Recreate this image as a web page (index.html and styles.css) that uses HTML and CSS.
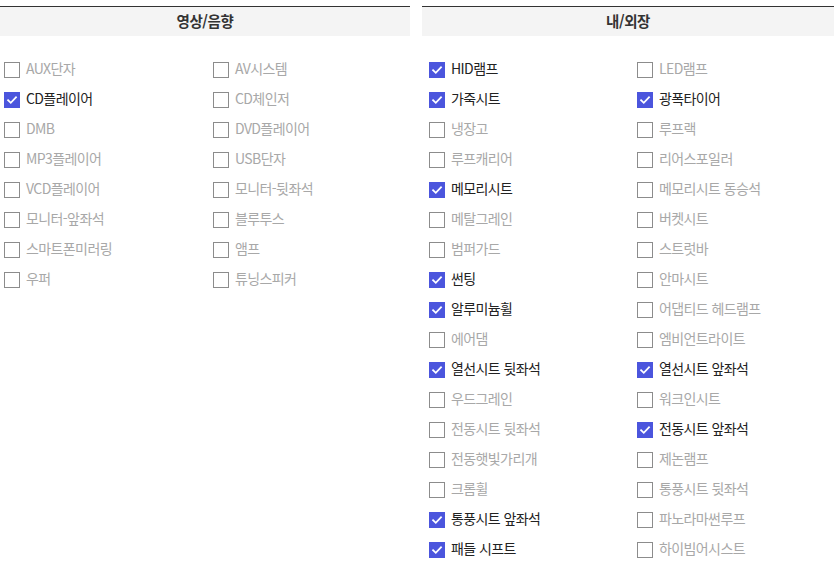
FILE: index.html
```html
<!DOCTYPE html>
<html lang="ko">
<head>
<meta charset="utf-8">
<link rel="stylesheet" href="styles.css">
</head>
<body>
<div class="wrap">
  <section class="panel panel-left">
    <h2 class="head">영상/음향</h2>
    <ul class="list">
      <li class="item"><span class="box"></span>AUX단자</li>
      <li class="item"><span class="box"></span>AV시스템</li>
      <li class="item on"><span class="box"><svg viewBox="0 0 16 16"><polyline points="3.5,8.2 6.6,11.2 12.6,4.8"/></svg></span>CD플레이어</li>
      <li class="item"><span class="box"></span>CD체인저</li>
      <li class="item"><span class="box"></span>DMB</li>
      <li class="item"><span class="box"></span>DVD플레이어</li>
      <li class="item"><span class="box"></span>MP3플레이어</li>
      <li class="item"><span class="box"></span>USB단자</li>
      <li class="item"><span class="box"></span>VCD플레이어</li>
      <li class="item"><span class="box"></span>모니터-뒷좌석</li>
      <li class="item"><span class="box"></span>모니터-앞좌석</li>
      <li class="item"><span class="box"></span>블루투스</li>
      <li class="item"><span class="box"></span>스마트폰미러링</li>
      <li class="item"><span class="box"></span>앰프</li>
      <li class="item"><span class="box"></span>우퍼</li>
      <li class="item"><span class="box"></span>튜닝스피커</li>
    </ul>
  </section>
  <section class="panel panel-right">
    <h2 class="head">내/외장</h2>
    <ul class="list">
      <li class="item on"><span class="box"><svg viewBox="0 0 16 16"><polyline points="3.5,8.2 6.6,11.2 12.6,4.8"/></svg></span>HID램프</li>
      <li class="item"><span class="box"></span>LED램프</li>
      <li class="item on"><span class="box"><svg viewBox="0 0 16 16"><polyline points="3.5,8.2 6.6,11.2 12.6,4.8"/></svg></span>가죽시트</li>
      <li class="item on"><span class="box"><svg viewBox="0 0 16 16"><polyline points="3.5,8.2 6.6,11.2 12.6,4.8"/></svg></span>광폭타이어</li>
      <li class="item"><span class="box"></span>냉장고</li>
      <li class="item"><span class="box"></span>루프랙</li>
      <li class="item"><span class="box"></span>루프캐리어</li>
      <li class="item"><span class="box"></span>리어스포일러</li>
      <li class="item on"><span class="box"><svg viewBox="0 0 16 16"><polyline points="3.5,8.2 6.6,11.2 12.6,4.8"/></svg></span>메모리시트</li>
      <li class="item"><span class="box"></span>메모리시트 동승석</li>
      <li class="item"><span class="box"></span>메탈그레인</li>
      <li class="item"><span class="box"></span>버켓시트</li>
      <li class="item"><span class="box"></span>범퍼가드</li>
      <li class="item"><span class="box"></span>스트럿바</li>
      <li class="item on"><span class="box"><svg viewBox="0 0 16 16"><polyline points="3.5,8.2 6.6,11.2 12.6,4.8"/></svg></span>썬팅</li>
      <li class="item"><span class="box"></span>안마시트</li>
      <li class="item on"><span class="box"><svg viewBox="0 0 16 16"><polyline points="3.5,8.2 6.6,11.2 12.6,4.8"/></svg></span>알루미늄휠</li>
      <li class="item"><span class="box"></span>어댑티드 헤드램프</li>
      <li class="item"><span class="box"></span>에어댐</li>
      <li class="item"><span class="box"></span>엠비언트라이트</li>
      <li class="item on"><span class="box"><svg viewBox="0 0 16 16"><polyline points="3.5,8.2 6.6,11.2 12.6,4.8"/></svg></span>열선시트 뒷좌석</li>
      <li class="item on"><span class="box"><svg viewBox="0 0 16 16"><polyline points="3.5,8.2 6.6,11.2 12.6,4.8"/></svg></span>열선시트 앞좌석</li>
      <li class="item"><span class="box"></span>우드그레인</li>
      <li class="item"><span class="box"></span>워크인시트</li>
      <li class="item"><span class="box"></span>전동시트 뒷좌석</li>
      <li class="item on"><span class="box"><svg viewBox="0 0 16 16"><polyline points="3.5,8.2 6.6,11.2 12.6,4.8"/></svg></span>전동시트 앞좌석</li>
      <li class="item"><span class="box"></span>전동햇빛가리개</li>
      <li class="item"><span class="box"></span>제논램프</li>
      <li class="item"><span class="box"></span>크롬휠</li>
      <li class="item"><span class="box"></span>통풍시트 뒷좌석</li>
      <li class="item on"><span class="box"><svg viewBox="0 0 16 16"><polyline points="3.5,8.2 6.6,11.2 12.6,4.8"/></svg></span>통풍시트 앞좌석</li>
      <li class="item"><span class="box"></span>파노라마썬루프</li>
      <li class="item on"><span class="box"><svg viewBox="0 0 16 16"><polyline points="3.5,8.2 6.6,11.2 12.6,4.8"/></svg></span>패들 시프트</li>
      <li class="item"><span class="box"></span>하이빔어시스트</li>
    </ul>
  </section>
</div>
</body>
</html>
```

FILE: styles.css
```css
html, body {
  margin: 0;
  padding: 0;
  background: #fff;
}
body {
  font-family: "Noto Sans CJK KR", "Noto Sans", "Liberation Sans", sans-serif;
  font-size: 14px;
  color: #222;
}
.wrap {
  display: flex;
  gap: 12px;
  padding-top: 6px;
}
.panel {
  border-top: 1px solid #333;
}
.panel-left {
  width: 410px;
}
.panel-right {
  width: 412px;
}
.head {
  margin: 0;
  height: 29px;
  line-height: 27px;
  background: #f4f4f4;
  text-align: center;
  font-size: 14.5px;
  font-weight: bold;
  color: #333;
  letter-spacing: -0.4px;
}
.list {
  list-style: none;
  margin: 0;
  padding: 17px 0 0 0;
  display: grid;
}
.panel-left .list {
  padding-left: 4px;
  grid-template-columns: 209px 1fr;
}
.panel-right .list {
  padding-left: 7px;
  grid-template-columns: 208px 1fr;
}
.item {
  height: 30px;
  display: flex;
  align-items: center;
  gap: 6px;
  color: #a8a8a8;
  letter-spacing: -0.6px;
  white-space: nowrap;
}
.item.on {
  color: #222;
}
.box {
  flex: none;
  width: 16px;
  height: 16px;
  box-sizing: border-box;
  border: 1px solid #8c8c8c;
  background: #fff;
  position: relative;
  top: 2px;
}
.item.on .box {
  border-color: #4b55dd;
  background: #4b55dd;
}
.box svg {
  display: block;
  width: 14px;
  height: 14px;
}
.box polyline {
  fill: none;
  stroke: #fff;
  stroke-width: 2;
  stroke-linecap: square;
  stroke-linejoin: miter;
}
```
